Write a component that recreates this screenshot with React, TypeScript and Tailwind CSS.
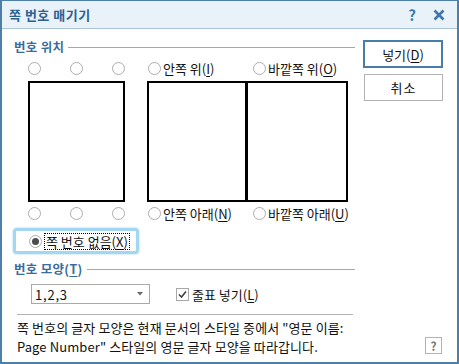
import React from "react";

const font = { fontFamily: '"Noto Sans CJK KR", "Noto Sans", sans-serif' };

function Radio({ checked = false }: { checked?: boolean }) {
  return (
    <span className="w-[13px] h-[13px] rounded-full border border-[#adadad] bg-white flex items-center justify-center shrink-0">
      {checked && <span className="w-[7px] h-[7px] rounded-full bg-[#4d4d4d]" />}
    </span>
  );
}

function Mn({ children }: { children: React.ReactNode }) {
  return <span className="underline underline-offset-2">{children}</span>;
}

function Heading({ children }: { children: React.ReactNode }) {
  return (
    <div className="flex items-center h-[16px] pl-[12px]">
      <span className="text-[12.5px] font-bold text-[#3a6d9b] leading-none whitespace-nowrap tracking-[0.3px]">{children}</span>
      <span className="flex-1 h-px bg-[#a8a8a8] ml-[4px]" />
    </div>
  );
}

function RadioRow({ left, right }: { left: React.ReactNode; right: React.ReactNode }) {
  return (
    <div className="flex items-center h-[14px]">
      <div className="ml-[26px] w-[97px] flex justify-between">
        <Radio />
        <Radio />
        <Radio />
      </div>
      <div className="ml-[23px] w-[105px] flex items-center gap-[2px] text-[13px] leading-none whitespace-nowrap">
        <Radio />
        <span>{left}</span>
      </div>
      <div className="flex items-center gap-[2px] text-[13px] leading-none whitespace-nowrap">
        <Radio />
        <span>{right}</span>
      </div>
    </div>
  );
}

export default function App() {
  return (
    <div
      className="w-[459px] h-[364px] bg-white flex flex-col border-x-2 border-b-2 border-t border-[#4e7fa9] text-[#111]"
      style={font}
    >
      <div className="h-[28px] shrink-0 flex items-center bg-[#e9f1f9] border-b border-[#a9c3da] pl-[7px] pr-[12px]">
        <span className="text-[13px] font-bold text-[#2c6193] tracking-[0.5px]">쪽 번호 매기기</span>
        <span className="ml-auto text-[15px] font-bold text-[#3d77ad] leading-none">?</span>
        <svg className="ml-[17px]" width="12" height="12" viewBox="0 0 12 12">
          <path d="M1.5 1.5L10.5 10.5M10.5 1.5L1.5 10.5" stroke="#3d77ad" strokeWidth="2.6" />
        </svg>
      </div>

      <div className="flex flex-1">
        <div className="w-[353px] flex flex-col">
          <div className="mt-[10px]">
            <Heading>번호 위치</Heading>
          </div>

          <div className="mt-[6px]">
            <RadioRow
              left={<>안쪽 위(<Mn>I</Mn>)</>}
              right={<>바깥쪽 위(<Mn>O</Mn>)</>}
            />
          </div>

          <div className="mt-[6px] flex h-[121px]">
            <div className="ml-[26px] w-[97px] border-2 border-black" />
            <div className="ml-[22px] w-[201px] border-2 border-black flex">
              <div className="w-[96px]" />
              <div className="w-[3px] bg-black" />
              <div className="flex-1" />
            </div>
          </div>

          <div className="mt-[4px]">
            <RadioRow
              left={<>안쪽 아래(<Mn>N</Mn>)</>}
              right={<>바깥쪽 아래(<Mn>U</Mn>)</>}
            />
          </div>

          <div className="mt-[8px] ml-[11px] w-[126px] h-[26px] rounded-[4px] border-[3px] border-[#a3d6f0] shadow-[0_0_2px_#8cc9ea] flex items-center">
            <span className="ml-[13px]">
              <Radio checked />
            </span>
            <span className="ml-[2px] px-[1px] border border-dotted border-black text-[13px] leading-[15px] whitespace-nowrap">
              쪽 번호 없음(<Mn>X</Mn>)
            </span>
          </div>

          <div className="mt-[7px]">
            <Heading>
              번호 모양(<Mn>T</Mn>)
            </Heading>
          </div>

          <div className="mt-[7px] flex items-center h-[20px]">
            <div className="ml-[29px] w-[119px] h-[20px] border border-[#a9a9a9] flex items-center pl-[3px] pr-[6px]">
              <span className="text-[13px] leading-none tracking-[0.8px]">1,2,3</span>
              <svg className="ml-auto" width="6" height="4" viewBox="0 0 6 4">
                <path d="M0 0H6L3 3.5Z" fill="#6a6a6a" />
              </svg>
            </div>
            <span className="ml-[26px] w-[13px] h-[13px] border border-[#a8a8a8] bg-white flex items-center justify-center">
              <svg width="9" height="9" viewBox="0 0 9 9">
                <path d="M1 4.5L3.5 7L8 1.5" stroke="#404040" strokeWidth="1.6" fill="none" />
              </svg>
            </span>
            <span className="ml-[3px] text-[13px] leading-none whitespace-nowrap">
              줄표 넣기(<Mn>L</Mn>)
            </span>
          </div>

          <div className="mt-[10px] ml-[15px] w-[336px] h-px bg-[#b4b4b4]" />

          <div className="mt-[3px] ml-[15px] text-[13px] leading-[19px] tracking-[0.1px] whitespace-nowrap">
            <div>쪽 번호의 글자 모양은 현재 문서의 스타일 중에서 "영문 이름:</div>
            <div>Page Number" 스타일의 영문 글자 모양을 따라갑니다.</div>
          </div>
        </div>

        <div className="flex-1 flex flex-col">
          <button className="mt-[11px] ml-[8px] w-[80px] h-[28px] border-2 border-[#4a7ca9] bg-white text-[13px] leading-none">
            넣기(<Mn>D</Mn>)
          </button>
          <button className="mt-[6px] ml-[9px] w-[79px] h-[27px] border border-[#b3b3b3] bg-white text-[13px] leading-none tracking-[1px]">
            취소
          </button>
          <div className="mt-auto mb-[8px] ml-[70px] w-[17px] h-[17px] border border-[#b3b3b3] flex items-center justify-center text-[12px] font-bold text-[#777] leading-none">
            ?
          </div>
        </div>
      </div>
    </div>
  );
}
